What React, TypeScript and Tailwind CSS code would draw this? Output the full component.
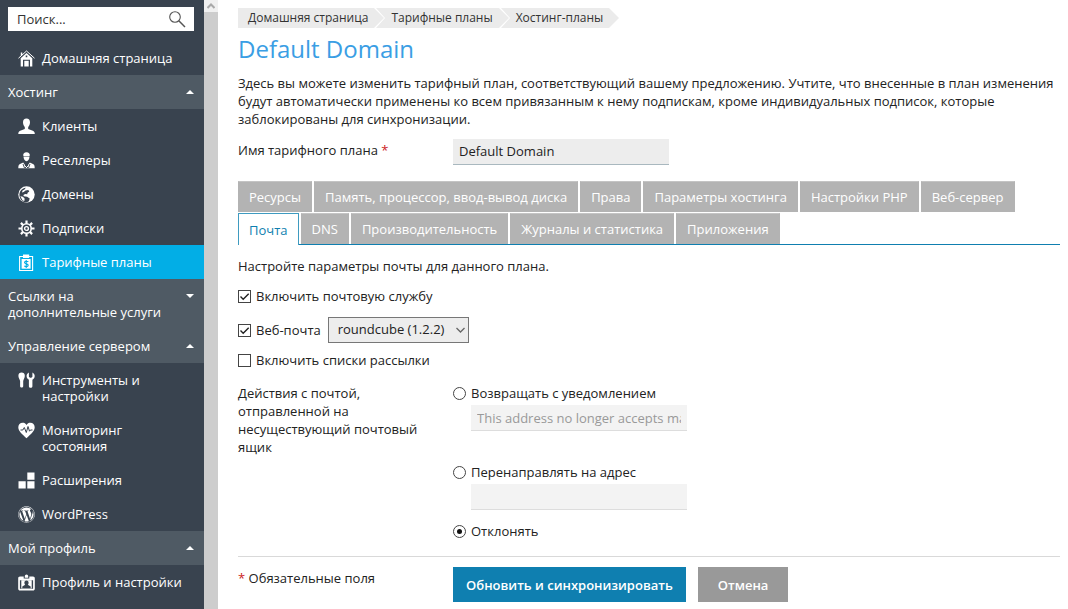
import { useState, type ReactNode } from 'react';
import { FaWordpress } from 'react-icons/fa';

const icons: Record<string, ReactNode> = {
  home: (
    <>
      <path d="M0.500 8.200 8.500 1l8 7.200" fill="none" stroke="currentColor" strokeWidth="1" />
      <path fillRule="evenodd" d="M2.700 8.300 8.500 3l5.800 5.300v8.200H12V9.700H5v6.800H2.700zM7.700 5.500V7.200h1.600V5.500z" />
      <path d="M6.300 10.800h4.400v5.700H6.300z" />
      <path d="M2.800 2.500h1.500v2.500L2.800 6.300z" />
    </>
  ),
  client: (
    <path d="M8.5 0.5c2.2 0 3.6 1.6 3.5 4-.1 2.200-1 3.600-1.800 4.400v2l4.600 1.800c1.300.5 2 1.500 2 3.300H.3c0-1.800.6-2.800 1.900-3.300l4.600-1.800v-2C6 8.100 5.100 6.700 5 4.500 4.900 2.100 6.300.5 8.500.5z" />
  ),
  reseller: (
    <>
      <path d="M8.500 0.300c2.200 0 3.500 1.300 3.300 3.300l-.5 0.500H5.700l-.5-.5C5 1.600 6.300.3 8.500.3z" />
      <path d="M5.500 4.500h6c0 2.500-1.300 4.700-3 4.700s-3-2.200-3-4.700z" />
      <path d="M5.200 10.600 8.500 15l3.300-4.400 3.200 1.300c1.200.5 1.700 1.700 1.700 4.300H.3c0-2.600.5-3.800 1.700-4.300z" />
      <path d="M5 12l1.500 4M12 12l-1.500 4M7 13l3 3M10 13l-3 3" stroke="#39434f" strokeWidth="0.900" />
    </>
  ),
  globe: (
    <>
      <circle cx="8.500" cy="8.500" r="8.200" />
      <path
        d="M7.800 1.700 6.500 3.400 4.600 4.500 3.900 6.600 5.700 6l1.800-1.600 2.800-.3 1 1.500-1.700 1.200-.4 1.500-2.100-.3-1.700 1 .3 1.200 3.400.6 2.600 1.700-.8 2.700-2.500 1.300C4.500 16.200 1.400 13 1.400 8.700c0-3.700 2.700-6.600 6.400-7z"
        fill="#39434f"
      />
      <path d="M2.300 10.300l2.600.4 1.700 1.700-.2 2.700-1.800-.6z" />
    </>
  ),
  gear: (
    <>
      <circle cx="8.500" cy="8.500" r="4.700" fill="none" stroke="currentColor" strokeWidth="1.600" />
      <circle cx="8.500" cy="8.500" r="1.900" fill="none" stroke="currentColor" strokeWidth="1.400" />
      <path
        d="M8.500 0.500v3.300M8.500 13.200v3.300M0.500 8.500h3.300M13.200 8.500h3.300M2.900 2.900l2.300 2.300M11.800 11.800l2.300 2.300M14.100 2.900l-2.300 2.300M5.200 11.800l-2.300 2.300"
        stroke="currentColor"
        strokeWidth="2.200"
      />
    </>
  ),
  plan: (
    <>
      <path d="M1.600 2.500h13v14h-13z" fill="none" stroke="currentColor" strokeWidth="1.100" />
      <path d="M5 0.500h6.200v3.500H5z" />
      <path d="M3.600 5h9v9.700h-9z" />
      <path
        d="M10.300 7.800C9.500 6.900 6.500 7 6.500 8.600s3.700 1 3.700 2.700-2.800 1.600-3.900.5M8.200 6v8"
        fill="none"
        stroke="#02aee6"
        strokeWidth="1.100"
      />
    </>
  ),
  tools: (
    <>
      <path d="M3.600 0.500c1.900 0 3.200 1.200 3.200 3.200C6.800 6 5.600 6.900 5.200 9v5.200c0 1.700-3.100 1.700-3.100 0V9C1.700 6.900.4 6 .4 3.700.4 1.700 1.700.5 3.600.5z" />
      <path d="M10.900 0.500v4.200l1.100 1h1.300l1.100-1V.5c1.500.8 2.300 2 2.300 3.600 0 1.700-.9 2.900-2.300 3.600v6.600c0 2-3.500 2-3.500 0V7.700c-1.400-.7-2.300-1.900-2.300-3.600 0-1.600.8-2.800 2.300-3.600z" />
    </>
  ),
  heart: (
    <>
      <path d="M8.500 3.100C9.400 1.400 10.700.8 12.300.8c2.600 0 4.400 1.900 4.400 4.500 0 4-4.500 7.600-8.200 10.900C4.800 12.900.3 9.300.3 5.300.3 2.700 2.100.8 4.700.8c1.600 0 2.900.6 3.800 2.300z" />
      <path d="M2.500 8h2.300l1.500-2.500 2 5 1.700-6 1.500 4.700 1-1.200h2" fill="none" stroke="#39434f" strokeWidth="1" />
    </>
  ),
  extensions: <path d="M9.300 0.500h7.200v7.200H9.300zM.5 9.300h7.200v7.200H.5zM9.300 9.300h7.200v7.200H9.300z" />,
  profile: (
    <>
      <path
        fillRule="evenodd"
        d="M2 2.500h3.700v2h5.600v-2H15c1.100 0 1.800.7 1.800 1.800v10.400c0 1.100-.7 1.800-1.800 1.800H2c-1.100 0-1.800-.7-1.800-1.800V4.300c0-1.100.7-1.800 1.800-1.800zM1.900 6.200v8.600h13.200V6.200z"
      />
      <path d="M6.800 3.800V2.100a1.700 1.700 0 0 1 3.400 0v1.700z" />
      <path d="M3.300 6.200h10.400v8.300H3.300z" />
      <path d="M8.500 6.500c1.500 0 2.200 1 2.100 2.400-.1.900-.4 1.500-.8 1.900l2.900 1.700v1.800H4.300v-1.800l2.900-1.700c-.4-.4-.7-1-.8-1.900-.1-1.400.6-2.400 2.100-2.400z" fill="#39434f" />
    </>
  ),
};

function Icon({ name }: { name: string }) {
  if (name === 'wordpress') return <FaWordpress className="-mb-px size-[17px] shrink-0" />;
  return (
    <svg viewBox="0 0 17 17" fill="currentColor" className="-mb-px size-[17px] shrink-0" aria-hidden="true">
      {icons[name]}
    </svg>
  );
}

type Item = { icon: string; label: string };
type Section = { title: string; open: boolean; items: Item[] };

const sections: Section[] = [
  {
    title: 'Хостинг',
    open: true,
    items: [
      { icon: 'client', label: 'Клиенты' },
      { icon: 'reseller', label: 'Реселлеры' },
      { icon: 'globe', label: 'Домены' },
      { icon: 'gear', label: 'Подписки' },
      { icon: 'plan', label: 'Тарифные планы' },
    ],
  },
  { title: 'Ссылки на дополнительные услуги', open: false, items: [] },
  {
    title: 'Управление сервером',
    open: true,
    items: [
      { icon: 'tools', label: 'Инструменты и настройки' },
      { icon: 'heart', label: 'Мониторинг состояния' },
      { icon: 'extensions', label: 'Расширения' },
      { icon: 'wordpress', label: 'WordPress' },
    ],
  },
  { title: 'Мой профиль', open: true, items: [{ icon: 'profile', label: 'Профиль и настройки' }] },
];

function NavItem({ icon, label }: Item) {
  const active = label === 'Тарифные планы';
  return (
    <a href="#" className={`flex gap-[7px] py-[9px] pr-4 pl-[18px] ${active ? 'bg-[#02aee6]' : 'hover:bg-[#2f3943]'}`}>
      <Icon name={icon} />
      <span>{label}</span>
    </a>
  );
}

function Sidebar() {
  return (
    <aside className="w-[204px] shrink-0 overflow-hidden bg-[#39434f] text-[13px] leading-4 text-white">
      <div className="px-2 pt-[7px] pb-[10px]">
        <div className="mr-[2px] flex h-6 items-center bg-white pr-2 pl-[9px]">
          <input
            type="text"
            aria-label="Поиск"
            placeholder="Поиск..."
            className="w-full min-w-0 text-[#333] outline-none placeholder:text-[#333]"
          />
          <button type="button" aria-label="Найти" className="text-[#555]">
            <svg viewBox="0 0 17 17" className="size-[17px]" fill="none" stroke="currentColor">
              <circle cx="6" cy="6" r="5.300" strokeWidth="1.100" />
              <path d="M9.800 9.800 16 16" strokeWidth="1.500" />
            </svg>
          </button>
        </div>
      </div>
      <nav>
        <NavItem icon="home" label="Домашняя страница" />
        {sections.map((section) => (
          <div key={section.title}>
            <button
              type="button"
              aria-expanded={section.open}
              className="flex w-full justify-between bg-[#4f5a64] py-[9px] pr-[10px] pl-2 text-left"
            >
              <span className="max-w-[160px]">{section.title}</span>
              <svg viewBox="0 0 8 4" className={`mt-[6px] h-1 w-2 shrink-0 ${section.open ? '' : 'rotate-180'}`} fill="currentColor">
                <path d="M0 4 4 0l4 4z" />
              </svg>
            </button>
            {section.items.map((item) => (
              <NavItem key={item.label} {...item} />
            ))}
          </div>
        ))}
      </nav>
    </aside>
  );
}

function ScrollBar() {
  return (
    <div className="flex w-[14px] shrink-0 flex-col bg-[#cdcdcd]">
      <div className="flex h-3 items-center justify-center bg-[#f0f0f0]">
        <svg viewBox="0 0 8 6" className="h-[6px] w-2" fill="none" stroke="#a9a9a9" strokeWidth="2">
          <path d="M0.500 5 4 1.500 7.500 5" />
        </svg>
      </div>
    </div>
  );
}

const crumbs = ['Домашняя страница', 'Тарифные планы', 'Хостинг-планы'];

function Breadcrumbs() {
  return (
    <nav className="flex h-5 text-[12px] leading-5 text-[#333]">
      {crumbs.map((crumb, i) => (
        <div key={crumb} className={`flex ${i > 0 ? '-ml-2' : ''}`}>
          {i > 0 && (
            <svg viewBox="0 0 9 20" className="h-5 w-[9px]" fill="#ebebeb">
              <path d="M0 0h9v20H0l9-10z" />
            </svg>
          )}
          <a href="#" className={`bg-[#ebebeb] pr-[6px] ${i > 0 ? 'pl-[6px]' : 'pl-[10px]'}`}>
            {crumb}
          </a>
          <svg viewBox="0 0 10 20" className="h-5 w-[10px]" fill="#ebebeb">
            <path d="M0 0 10 10 0 20z" />
          </svg>
        </div>
      ))}
    </nav>
  );
}

const tabs = [
  'Ресурсы',
  'Память, процессор, ввод-вывод диска',
  'Права',
  'Параметры хостинга',
  'Настройки PHP',
  'Веб-сервер',
  'Почта',
  'DNS',
  'Производительность',
  'Журналы и статистика',
  'Приложения',
];

function Tabs() {
  const [active, setActive] = useState('Почта');
  return (
    <div role="tablist" className="flex flex-wrap gap-x-[2px] gap-y-px border-b border-[#0f7fb0]">
      {tabs.map((tab) => (
        <button
          key={tab}
          type="button"
          role="tab"
          aria-selected={tab === active}
          onClick={() => setActive(tab)}
          className={
            tab === active
              ? '-mb-px h-8 border border-b-0 border-[#3f9bc0] bg-white px-[10px] text-[#0f7fb0]'
              : 'h-[31px] border border-[#b3b3b3] border-t-[#c4c4c4] bg-[#b3b3b3] px-[10px] text-white'
          }
        >
          {tab}
        </button>
      ))}
    </div>
  );
}

function Check({ id, label, checked }: { id: string; label: string; checked?: boolean }) {
  return (
    <label htmlFor={id} className="flex items-center gap-[5px]">
      <span className="grid size-[13px]">
        <input
          id={id}
          type="checkbox"
          defaultChecked={checked}
          className="peer col-start-1 row-start-1 size-[13px] appearance-none border border-[#444] bg-white"
        />
        <svg
          viewBox="0 0 13 13"
          className="pointer-events-none invisible col-start-1 row-start-1 size-[13px] peer-checked:visible"
          fill="none"
          stroke="#222"
          strokeWidth="1.400"
        >
          <path d="M2.500 6.500 5.200 9.200 10.700 3.700" />
        </svg>
      </span>
      {label}
    </label>
  );
}

function Radio({ id, label, checked }: { id: string; label: string; checked?: boolean }) {
  return (
    <label htmlFor={id} className="flex items-center gap-[5px]">
      <span className="grid size-[13px] place-items-center">
        <input
          id={id}
          type="radio"
          name="bounce"
          defaultChecked={checked}
          className="peer col-start-1 row-start-1 size-[13px] appearance-none rounded-full border border-[#444] bg-white"
        />
        <span className="pointer-events-none invisible col-start-1 row-start-1 size-[5px] rounded-full bg-[#111] peer-checked:visible" />
      </span>
      {label}
    </label>
  );
}

export default function App() {
  return (
    <div className="flex h-screen overflow-hidden bg-white font-['Open_Sans','Noto_Sans',sans-serif] text-[13px] leading-[18px] text-[#222]">
      <Sidebar />
      <ScrollBar />
      <main className="min-w-0 flex-1 overflow-hidden pt-2 pr-2 pl-5">
        <Breadcrumbs />
        <h1 className="mt-1 text-[24px] leading-[34px] text-[#3a9ee4]">Default Domain</h1>
        <p className="mt-2">
          Здесь вы можете изменить тарифный план, соответствующий вашему предложению. Учтите, что внесенные в план
          изменения будут автоматически применены ко всем привязанным к нему подпискам, кроме индивидуальных подписок,
          которые заблокированы для синхронизации.
        </p>

        <div className="mt-[11px] flex">
          <label htmlFor="plan-name" className="mt-[2px] w-[215px] shrink-0">
            Имя тарифного плана <span className="text-[#c22]">*</span>
          </label>
          <input
            id="plan-name"
            type="text"
            defaultValue="Default Domain"
            className="h-[26px] w-[216px] border-b border-[#a9b8bf] bg-[#ededed] px-[6px] pb-px"
          />
        </div>

        <div className="mt-4">
          <Tabs />
        </div>

        <p className="mt-3">Настройте параметры почты для данного плана.</p>
        <div className="mt-3 flex">
          <Check id="mail" label="Включить почтовую службу" checked />
        </div>
        <div className="mt-3 flex items-center gap-[7px]">
          <Check id="webmail" label="Веб-почта" checked />
          <div className="grid">
            <select
              aria-label="Веб-почта"
              className="col-start-1 row-start-1 h-[26px] w-[141px] appearance-none border border-[#777] bg-[#ededed] pb-[2px] pl-[9px]"
            >
              <option>roundcube (1.2.2)</option>
            </select>
            <svg
              viewBox="0 0 9 6"
              className="pointer-events-none col-start-1 row-start-1 mr-1 h-[6px] w-[9px] self-center justify-self-end"
              fill="none"
              stroke="#666"
              strokeWidth="1.300"
            >
              <path d="M0.500 1 4.500 5 8.500 1" />
            </svg>
          </div>
        </div>
        <div className="mt-2 flex">
          <Check id="lists" label="Включить списки рассылки" />
        </div>

        <div role="radiogroup" aria-labelledby="bounce-label" className="mt-[15px] flex">
          <div id="bounce-label" className="w-[215px] shrink-0 pr-8">
            Действия с почтой, отправленной на несуществующий почтовый ящик
          </div>
          <div>
            <Radio id="bounce-notify" label="Возвращать с уведомлением" />
            <input
              type="text"
              aria-label="Текст уведомления"
              disabled
              defaultValue="This address no longer accepts mail."
              className="mt-[3px] ml-[18px] block h-[26px] w-[216px] border-b border-[#ddd] bg-[#f3f3f3] px-[6px] text-[#999]"
            />
            <div className="mt-8">
              <Radio id="bounce-forward" label="Перенаправлять на адрес" />
            </div>
            <input
              type="text"
              aria-label="Адрес для перенаправления"
              disabled
              className="mt-[3px] ml-[18px] block h-[26px] w-[216px] border-b border-[#ddd] bg-[#f3f3f3] px-[6px]"
            />
            <div className="mt-3">
              <Radio id="bounce-reject" label="Отклонять" checked />
            </div>
          </div>
        </div>

        <div className="mt-4 flex border-t border-[#d9d9d9] pt-[10px]">
          <div className="mt-[2px] w-[215px] shrink-0">
            <span className="text-[#c22]">*</span> Обязательные поля
          </div>
          <div className="flex gap-3 font-semibold text-white">
            <button type="button" className="h-[35px] bg-[#0f7fb0] px-[13px]">
              Обновить и синхронизировать
            </button>
            <button type="button" className="h-[35px] bg-[#999] px-5">
              Отмена
            </button>
          </div>
        </div>
      </main>
    </div>
  );
}
